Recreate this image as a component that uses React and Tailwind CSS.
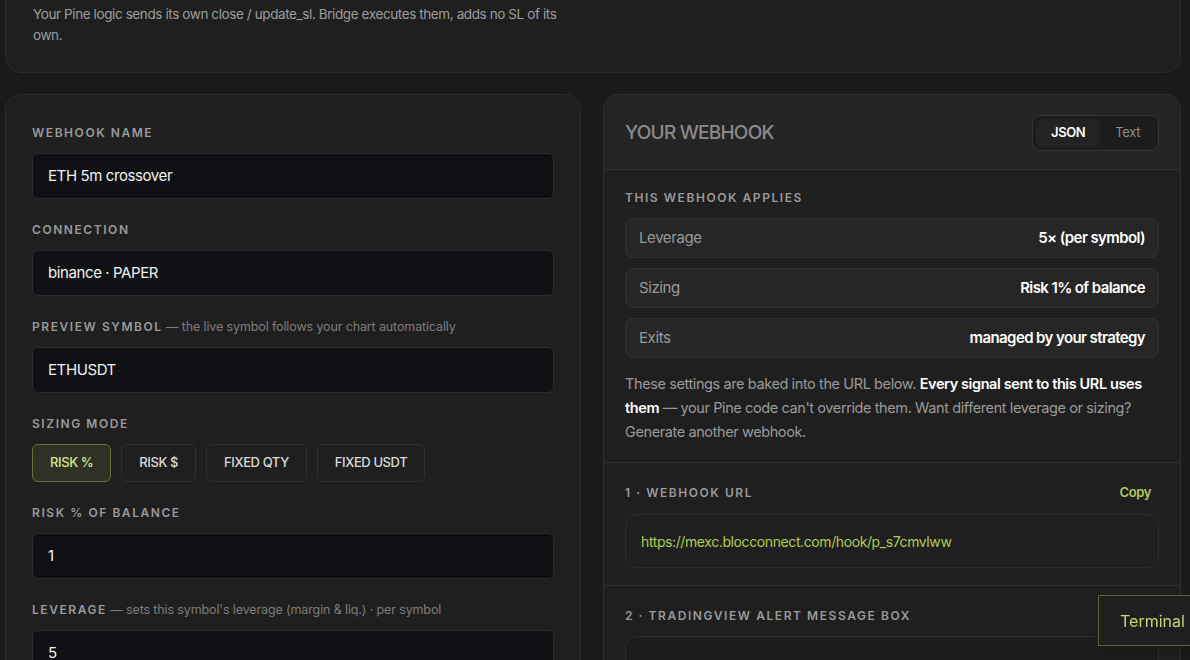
import React, { useState } from 'react';

const modes = ['RISK %', 'RISK $', 'FIXED QTY', 'FIXED USDT'];

const applies = [
    { label: 'Leverage', value: '5× (per symbol)' },
    { label: 'Sizing', value: 'Risk 1% of balance' },
    { label: 'Exits', value: 'managed by your strategy' },
];

const Label = ({ children, hint }) => (
    <div className="text-[12px] leading-4 font-semibold tracking-[0.13em] uppercase text-[#9a9a9a] mb-3">
        {children}
        {hint && <span className="normal-case tracking-[-0.01em] font-normal text-[12.5px] text-[#7c7c7c]"> — {hint}</span>}
    </div>
);

const Field = ({ label, hint, value }) => (
    <div>
        <Label hint={hint}>{label}</Label>
        <div className="h-[46px] flex items-center px-[15px] rounded-md bg-[#0f1013] border border-[#2a2b2f] text-[15px] text-[#f2f2f2]">
            {value}
        </div>
    </div>
);

const App = () => {
    const [mode, setMode] = useState('RISK %');
    const [format, setFormat] = useState('JSON');

    return (
        <div className="min-h-[660px] bg-[#1a1a1b] overflow-hidden font-['Inter',sans-serif] tracking-[-0.025em]">
            <div className="ml-[5px] w-[1176px]">
                {/* Exit note card */}
                <div className="-mt-[21px] pt-6 pb-[26px] px-[27px] rounded-2xl bg-[#1f1f20] border border-[#2b2b2c] text-[13.5px] leading-[21px] text-[#9d9d9d]">
                    <p className="max-w-[532px]">
                        Your Pine logic sends its own close / update_sl. Bridge executes them, adds no SL of its own.
                    </p>
                </div>

                <div className="grid grid-cols-[576px_578px] gap-[22px] mt-[21px]">
                    {/* Left: form */}
                    <div className="rounded-t-2xl bg-[#1f1f20] border border-[#2b2b2c] border-b-0 px-[26px] pt-[30px] flex flex-col gap-[23px]">
                        <Field label="Webhook name" value="ETH 5m crossover" />
                        <Field label="Connection" value="binance · PAPER" />
                        <Field label="Preview symbol" hint="the live symbol follows your chart automatically" value="ETHUSDT" />
                        <div>
                            <Label>Sizing mode</Label>
                            <div className="flex gap-[10px]">
                                {modes.map((m) => (
                                    <button
                                        key={m}
                                        onClick={() => setMode(m)}
                                        className={`h-[38px] px-[17px] rounded-md border text-[13px] font-medium ${mode === m ? 'bg-[#2e3124] border-[#6a7143] text-[#d6e58c]' : 'bg-[#1f1f20] border-[#303032] text-[#dadada]'}`}
                                    >
                                        {m}
                                    </button>
                                ))}
                            </div>
                        </div>
                        <Field label="Risk % of balance" value="1" />
                        <Field label="Leverage" hint="sets this symbol's leverage (margin & liq.) · per symbol" value="5" />
                    </div>

                    {/* Right: webhook */}
                    <div className="rounded-t-2xl bg-[#1f1f20] border border-[#2f2f30] border-b-0 overflow-hidden">
                        <div className="h-[75px] pt-[2px] px-[21px] flex items-center justify-between bg-[#242425] border-b border-[#303031]">
                            <h2 className="text-[19px] font-medium tracking-[-0.04em] text-[#8a8a8a]">YOUR WEBHOOK</h2>
                            <div className="flex p-[3px] rounded-lg bg-[#1c1c1d] border border-[#333335]">
                                {['JSON', 'Text'].map((f) => (
                                    <button
                                        key={f}
                                        onClick={() => setFormat(f)}
                                        className={`h-[28px] px-[15px] rounded-md text-[13px] ${format === f ? 'bg-[#232324] text-white font-semibold' : 'text-[#8d8d8d]'}`}
                                    >
                                        {f}
                                    </button>
                                ))}
                            </div>
                        </div>

                        <div className="px-[21px] pt-5 pb-[18px] border-b border-[#303031]">
                            <Label>This webhook applies</Label>
                            <div className="flex flex-col gap-[10px] mt-[1px]">
                                {applies.map((r) => (
                                    <div key={r.label} className="h-[40px] px-[13px] flex items-center justify-between rounded-lg bg-[#262627] border border-[#313132] text-[15px]">
                                        <span className="text-[#9a9a9a]">{r.label}</span>
                                        <span className="font-semibold text-white tracking-[-0.04em]">{r.value}</span>
                                    </div>
                                ))}
                            </div>
                            <p className="mt-[14px] text-[14.5px] leading-6 text-[#9a9a9a]">
                                These settings are baked into the URL below. <span className="font-semibold text-white">Every signal sent to this URL uses them</span> — your Pine code can't override them. Want different leverage or sizing? Generate another webhook.
                            </p>
                        </div>

                        <div className="px-[21px] pt-5 pb-[17px] border-b border-[#303031]">
                            <div className="h-5 flex items-center justify-between mb-[11px]">
                                <span className="text-[12px] leading-4 font-semibold tracking-[0.13em] uppercase text-[#9a9a9a]">1 · Webhook URL</span>
                                <button className="text-[13px] font-semibold text-[#b6cb5c] mr-[8px]">Copy</button>
                            </div>
                            <div className="h-[54px] px-[15px] flex items-center rounded-xl bg-[#1f1f20] border border-[#2f2f30] text-[14px] text-[#b0cc4e]">
                                https://mexc.blocconnect.com/hook/p_s7cmvlww
                            </div>
                        </div>

                        <div className="px-[21px] pt-[22px]">
                            <Label>2 · TradingView alert message box</Label>
                            <div className="h-[60px] rounded-xl bg-[#1c1c1d] border border-[#2f2f30]" />
                        </div>
                    </div>
                </div>
            </div>

            {/* Floating terminal tab */}
            <div className="fixed left-[1098px] bottom-[14px] w-[120px] h-[51px] flex items-center pl-[21px] bg-[#1f1f20] border border-[#5c603c] text-[16px] text-[#c4d872] tracking-normal shadow-lg">
                Terminal
            </div>
        </div>
    );
};

export default App;
